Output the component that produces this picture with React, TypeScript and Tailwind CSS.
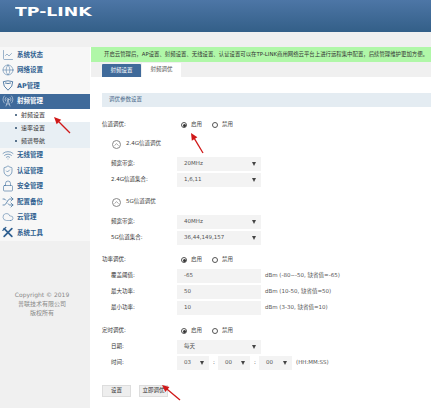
import React from 'react';
import { ChartLine, Globe, Wifi, ShieldCheck, Lock, Shuffle, Cloud, RadioTower, ChevronUp } from 'lucide-react';

const font = { fontFamily: '"DejaVu Sans", "Noto Sans CJK SC", sans-serif' };

const ApIcon = () => (
  <svg width="13" height="13" viewBox="0 0 14 14" fill="none" stroke="#3d6d9c" strokeWidth="1">
    <path d="M1.5 2.5 Q7 0.5 12.5 2.5 Q13 8 7 12.5 Q1 8 1.5 2.5Z" />
    <path d="M3.5 4 Q7 5.5 10.5 4" />
  </svg>
);

const ToolIcon = () => (
  <svg width="13" height="13" viewBox="0 0 14 14" fill="none" stroke="#2f5f90" strokeWidth="2" strokeLinecap="round">
    <path d="M2.5 2.5 L11.5 11.5" />
    <path d="M11.5 2.5 L2.5 11.5" />
    <path d="M1 4.5 L4.5 1" strokeWidth="1.5" />
  </svg>
);

const Radio = ({ on, label }: { on?: boolean; label: string }) => (
  <span className="flex items-center gap-[4px] w-[31px]">
    <span className="w-[6px] h-[6px] rounded-full border border-[#555] flex items-center justify-center bg-white shrink-0">
      {on && <span className="w-[3px] h-[3px] rounded-full bg-[#333]" />}
    </span>
    <span>{label}</span>
  </span>
);

const Radios = () => (
  <div className="flex items-center absolute left-[79px] text-[#444]">
    <Radio on label="启用" />
    <Radio label="禁用" />
  </div>
);

const Select = ({ value, width = 'w-[84px]' }: { value: string; width?: string }) => (
  <div className={`${width} h-[14px] bg-[#f3f3f3] flex items-center justify-between pl-[7px] pr-[5px] text-[#555]`}>
    <span>{value}</span>
    <span className="w-0 h-0 border-l-[2.5px] border-r-[2.5px] border-t-[4px] border-l-transparent border-r-transparent border-t-[#444]" />
  </div>
);

const Input = ({ value }: { value: string }) => (
  <div className="w-[84px] h-[14px] bg-[#f3f3f3] flex items-center pl-[7px] text-[#555]">{value}</div>
);

const Field = ({ label, children }: { label: string; children: React.ReactNode }) => (
  <div className="flex items-center h-[16px] pl-[9px]">
    <span className="w-[66px] shrink-0 text-[#333]">{label}</span>
    <div className="flex items-center gap-[4px]">{children}</div>
  </div>
);

const Heading = ({ label }: { label: string }) => (
  <div className="flex items-center h-[16px] text-[#333] relative">
    {label}
    <Radios />
  </div>
);

const Collapse = ({ label }: { label: string }) => (
  <div className="flex items-center gap-[5px] h-[16px] pl-[10px] text-[#444]">
    <span className="w-[9px] h-[9px] rounded-full border border-[#888] flex items-center justify-center">
      <ChevronUp size={7} color="#666" />
    </span>
    {label}
  </div>
);

const Arrow = ({ x1, y1, x2, y2 }: { x1: number; y1: number; x2: number; y2: number }) => {
  const a = Math.atan2(y2 - y1, x2 - x1);
  const p = (d: number, o: number) => `${x2 - d * Math.cos(a) - o * Math.sin(a)},${y2 - d * Math.sin(a) + o * Math.cos(a)}`;
  return (
    <>
      <line x1={x1} y1={y1} x2={x2 - 4 * Math.cos(a)} y2={y2 - 4 * Math.sin(a)} stroke="#d01818" strokeWidth="1.3" />
      <polygon points={`${x2},${y2} ${p(7, 3.2)} ${p(7, -3.2)}`} fill="#d01818" />
    </>
  );
};

const menu = [
  { label: '系统状态', icon: <ChartLine size={12} strokeWidth={1} color="#3d6d9c" /> },
  { label: '网络设置', icon: <Globe size={12} strokeWidth={1} color="#3d6d9c" /> },
  { label: 'AP管理', icon: <ApIcon /> },
];

const menu2 = [
  { label: '无线管理', icon: <Wifi size={12} strokeWidth={1.2} color="#3d6d9c" /> },
  { label: '认证管理', icon: <ShieldCheck size={12} strokeWidth={1.2} color="#3d6d9c" /> },
  { label: '安全管理', icon: <Lock size={12} strokeWidth={1.2} color="#3d6d9c" /> },
  { label: '配置备份', icon: <Shuffle size={12} strokeWidth={1.5} color="#3d6d9c" /> },
  { label: '云管理', icon: <Cloud size={12} strokeWidth={1} color="#3d6d9c" /> },
  { label: '系统工具', icon: <ToolIcon /> },
];

const MenuRow = ({ label, icon }: { label: string; icon: React.ReactNode }) => (
  <div className="flex items-center h-[15.5px] pl-[2px] gap-[3px] text-[6.5px] font-bold text-[#2f5f90] bg-[#f7f7f7]">
    <span className="w-[12px] flex justify-center">{icon}</span>
    {label}
  </div>
);

const SubRow = ({ label, active }: { label: string; active?: boolean }) => (
  <div className={`flex items-center h-[13px] pl-[15px] gap-[4px] text-[6px] text-[#333] ${active ? 'bg-white' : 'bg-[#e8eff4]'}`}>
    <span className="w-[2px] h-[2px] bg-[#2a4a6a] rounded-full" />
    {label}
  </div>
);

export default function App() {
  return (
    <div className="relative w-[431px] h-[408px] overflow-hidden bg-white text-[5.5px] leading-none" style={font}>
      {/* Header */}
      <div className="h-[32px] bg-gradient-to-b from-[#4d76a6] to-[#335f88] pl-[15px] pt-[5px]">
        <span className="block text-white font-bold text-[13px] leading-[14px] origin-left scale-x-[1.33]">
          TP-LINK
        </span>
      </div>
      <div className="h-[15px] bg-[#f0f0f0]" />

      <div className="flex h-[361px]">
        {/* Sidebar */}
        <aside className="w-[90px] shrink-0 bg-[#f0f0f0] mr-[1px]">
          {menu.map(m => <MenuRow key={m.label} {...m} />)}
          <div className="flex items-center h-[15px] pl-[2px] gap-[3px] text-[6.5px] font-bold text-white bg-[#3f6a9a]">
            <span className="w-[12px] flex justify-center"><RadioTower size={12} strokeWidth={1} color="#fff" /></span>
            射频管理
          </div>
          <SubRow label="射频设置" active />
          <SubRow label="速率设置" />
          <SubRow label="频谱导航" />
          {menu2.map(m => <MenuRow key={m.label} {...m} />)}
          <div className="mt-[51px] flex flex-col items-center gap-[3px] text-[6px] text-[#888] pr-[6px]">
            <span>Copyright © 2019</span>
            <span>普联技术有限公司</span>
            <span>版权所有</span>
          </div>
        </aside>

        {/* Main */}
        <main className="flex-1 min-w-0">
          <div className="h-[15px] bg-[#b0f7a8] flex items-center pl-[13px] text-[5.4px] text-[#333] whitespace-nowrap">
            开启云管理后，AP设置、射频设置、无线设置、认证设置可以在TP-LINK商用网络云平台上进行远程集中配置，后续管理维护更加方便。
          </div>
          <div className="h-[15px] bg-[#f0f0f0] flex items-end pl-[11px]">
            <div className="w-[39px] h-[13px] bg-[#3f6a9a] text-white flex items-center justify-center rounded-t-[1px]">射频设置</div>
            <div className="w-[39px] h-[14px] bg-white text-[#555] flex items-center justify-center ml-[1px]">射频调优</div>
          </div>

          <div className="pl-[11px] pt-[16px]">
            <div className="h-[14px] bg-[#e4ecf2] flex items-center pl-[7px] text-[#4a6a8a]">调优参数设置</div>

            <div className="mt-[10px]"><Heading label="信道调优:" /></div>
            <div className="mt-[3px]"><Collapse label="2.4G信道调优" /></div>
            <div className="mt-[4px]"><Field label="频宽带宽:"><Select value="20MHz" /></Field></div>
            <Field label="2.4G信道集合:"><Select value="1,6,11" /></Field>
            <div className="mt-[6px]"><Collapse label="5G信道调优" /></div>
            <div className="mt-[4px]"><Field label="频宽带宽:"><Select value="40MHz" /></Field></div>
            <Field label="5G信道集合:"><Select value="36,44,149,157" /></Field>

            <div className="mt-[6px]"><Heading label="功率调优:" /></div>
            <Field label="覆盖阈值:"><Input value="-65" /><span className="text-[#555] whitespace-nowrap">dBm (-80~-50, 缺省值=-65)</span></Field>
            <Field label="最大功率:"><Input value="50" /><span className="text-[#555] whitespace-nowrap">dBm (10-50, 缺省值=50)</span></Field>
            <Field label="最小功率:"><Input value="10" /><span className="text-[#555] whitespace-nowrap">dBm (3-30, 缺省值=10)</span></Field>

            <div className="mt-[7px]"><Heading label="定时调优:" /></div>
            <Field label="日期:"><Select value="每天" /></Field>
            <Field label="时间:">
              <Select value="03" width="w-[32px]" />
              <span className="w-[1px] text-[#333]">:</span>
              <Select value="00" width="w-[32px]" />
              <span className="w-[1px] text-[#333]">:</span>
              <Select value="00" width="w-[33px]" />
              <span className="text-[#555]">(HH:MM:SS)</span>
            </Field>

            <div className="flex gap-[8px] mt-[14px]">
              <button className="w-[29px] h-[12px] bg-[#eeeeee] border border-[#ddd] text-[#333] leading-none">设置</button>
              <button className="w-[29px] h-[12px] bg-[#eeeeee] border border-[#ddd] text-[#333] leading-none whitespace-nowrap">立即调优</button>
            </div>
          </div>
        </main>
      </div>

      {/* Annotation arrows */}
      <svg className="absolute inset-0 pointer-events-none" width="431" height="408">
        <Arrow x1={70} y1={133} x2={54} y2={117} />
        <Arrow x1={203} y1={153} x2={191} y2={133} />
        <Arrow x1={180} y1={400} x2={162} y2={385} />
      </svg>
    </div>
  );
}
